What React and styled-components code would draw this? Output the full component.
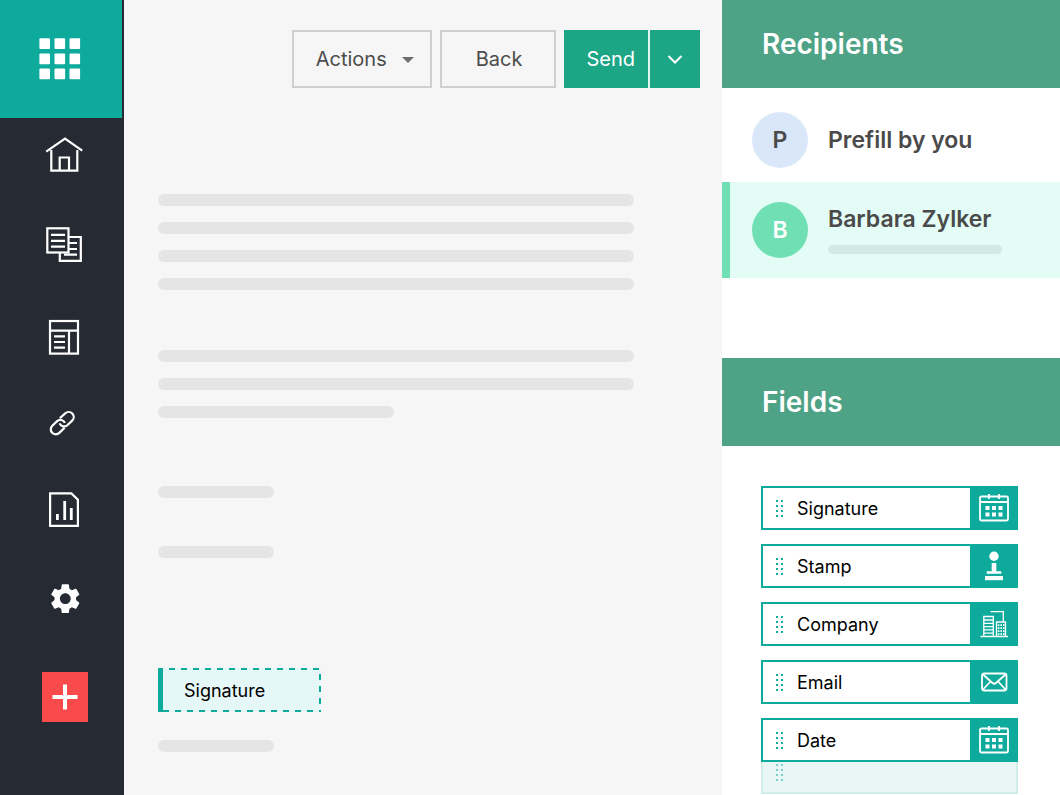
import React, { useState } from 'react'
import styled, { createGlobalStyle } from 'styled-components'
import { MdSettings } from 'react-icons/md'

const GlobalStyle = createGlobalStyle`
  * {
    box-sizing: border-box;
  }
  body {
    margin: 0;
    background-color: #fff;
    font-family: Inter, 'Liberation Sans', sans-serif;
  }
  button {
    font-family: inherit;
    cursor: pointer;
  }
  svg {
    display: block;
  }
`;

const Page = styled.div`
  display: flex;
  min-height: 100vh;
`;

//  Left navigation
//

const Sidebar = styled.aside`
  flex: 0 0 124px;
  background-color: #252a33;
`;

const Logo = styled.a`
  display: flex;
  align-items: center;
  margin-right: 2px;
  height: 118px;
  padding-left: 38px;
  background-color: #0eab9d;
`;

const Nav = styled.nav`
  display: flex;
  flex-direction: column;
  align-items: center;
  gap: 41px;
  padding: 13px 0 48px 4px;
  a {
    color: #fff;
  }
`;

const AddButton = styled.button`
  display: flex;
  align-items: center;
  justify-content: center;
  width: 46px;
  height: 50px;
  margin-left: 42px;
  padding: 0;
  border: none;
  background-color: #fb4a4c;
`;

//  Document
//

const Document = styled.main`
  flex: 1;
  min-width: 0;
  background-color: #f6f6f6;
`;

const Toolbar = styled.div`
  display: flex;
  justify-content: flex-end;
  gap: 8px;
  padding: 30px 22px 0;
`;

const ToolButton = styled.button`
  display: flex;
  align-items: center;
  justify-content: center;
  gap: 14px;
  height: 58px;
  padding: ${(props) => props.$padding};
  border: 2px solid #cfcfcf;
  background-color: transparent;
  color: #4c4c4c;
  font-size: 20px;
`;

const SendGroup = styled.div`
  display: flex;
  gap: 2px;
  background-color: #e4f5f0;
`;

const SendButton = styled.button`
  display: flex;
  align-items: center;
  justify-content: center;
  height: 58px;
  padding: ${(props) => props.$padding};
  border: none;
  background-color: #1ca686;
  color: #fff;
  font-size: 20px;
`;

const Paper = styled.div`
  padding: 106px 88px 40px 34px;
`;

const Paragraph = styled.div`
  display: flex;
  flex-direction: column;
  gap: 16px;
  margin-bottom: ${(props) => props.$after}px;
`;

const Line = styled.div`
  width: ${(props) => props.$width || '100%'};
  height: 12px;
  border-radius: 6px;
  background-color: #e5e5e5;
`;

const Dropped = styled.div`
  display: flex;
  width: 163px;
  height: 44px;
  margin-bottom: 28px;
  border-left: 5px solid #0eab9d;
`;

// dashes on three sides, the left side is solid
const DroppedLabel = styled.div`
  flex: 1;
  display: flex;
  align-items: center;
  padding-left: 21px;
  color: #000;
  font-size: 18px;
  background-color: #e5f7f6;
  background-image:
    repeating-linear-gradient(90deg, transparent 0 6px, #0eab9d 6px 12px),
    repeating-linear-gradient(90deg, #0eab9d 0 6px, transparent 6px 12px),
    repeating-linear-gradient(180deg, transparent 0 6px, #0eab9d 6px 12px);
  background-size: 100% 2px, 100% 2px, 2px 100%;
  background-position: top, bottom, right;
  background-repeat: no-repeat;
`;

//  Right panel
//

const Panel = styled.aside`
  flex: 0 0 338px;
  background-color: #fff;
`;

const PanelTitle = styled.h2`
  display: flex;
  align-items: center;
  height: 88px;
  margin: 0;
  padding-left: 40px;
  background-color: #4ea285;
  color: #fff;
  font-size: 28px;
  font-weight: 600;
`;

const Recipients = styled.ul`
  margin: 0 0 80px;
  padding: 10px 0 0;
  list-style: none;
`;

const Recipient = styled.li`
  display: flex;
  align-items: center;
  gap: 20px;
  height: ${(props) => (props.$active ? 96 : 84)}px;
  padding: 0 20px 0 22px;
  border-left: 8px solid ${(props) => (props.$active ? '#70dfb4' : 'transparent')};
  background-color: ${(props) => (props.$active ? '#e3fcf6' : '#fff')};
  color: #4a4a4a;
`;

const Avatar = styled.span`
  display: flex;
  align-items: center;
  justify-content: center;
  flex: 0 0 56px;
  height: 56px;
  border-radius: 50%;
  background-color: ${(props) => props.$background};
  color: ${(props) => props.$color};
  font-size: 23px;
  font-weight: 600;
`;

const Name = styled.div`
  font-size: 23px;
  line-height: 26px;
  font-weight: 600;
`;

const EmailLine = styled.div`
  width: 174px;
  height: 9px;
  margin-top: 13px;
  border-radius: 5px;
  background-color: #d3e9e3;
`;

const FieldList = styled.ul`
  display: flex;
  flex-direction: column;
  gap: 14px;
  margin: 0;
  padding: 40px 42px 0 39px;
  list-style: none;
`;

const Field = styled.button`
  display: flex;
  align-items: stretch;
  width: 100%;
  height: 44px;
  padding: 0;
  border: 2px solid #0eab9d;
  background-color: #fff;
  color: #000;
  font-size: 18px;
`;

const Grip = styled.span`
  display: grid;
  grid-template-columns: 2px 2px;
  gap: 3px;
  align-content: center;
  padding: 0 14px 0 13px;
  i {
    width: 2px;
    height: 2px;
    background-color: #0eab9d;
  }
`;

const FieldName = styled.span`
  display: flex;
  align-items: center;
  flex: 1;
`;

const FieldIcon = styled.span`
  display: flex;
  align-items: center;
  justify-content: center;
  width: 46px;
  padding-left: 2px;
  color: #fff;
  background-color: #0eab9d;
`;

const NextField = styled.div`
  display: flex;
  height: 32px;
  margin: 0 42px 0 39px;
  padding-bottom: 9px;
  border: 2px solid #cfeee9;
  border-top: none;
  background-color: #e8f6f5;
  ${Grip} {
    opacity: 0.5;
  }
`;

const LogoIcon = () => (
  <svg width="44" height="44" viewBox="0 0 44 44" fill="#fff">
    {[1.4, 16.5, 31.5].map((x) => [1.3, 16.6, 31.6].map((y) => (
      <rect key={`${x}-${y}`} x={x} y={y} width="10.6" height="10.6" rx="1" />
    )))}
  </svg>
)

const NavIcon = ({ children }) => (
  <svg width="48" height="48" viewBox="0 0 48 48" fill="none" stroke="currentColor" strokeWidth="2.2">
    {children}
  </svg>
)

const HomeIcon = () => (
  <NavIcon>
    <path d="M6.2 20.6 25 7.6 42.2 19.6" />
    <path d="M11.3 19V39.7H37.3V19" />
    <path d="M19.7 39.7V26.5H29V39.7" />
  </NavIcon>
)

const DocumentsIcon = () => (
  <NavIcon>
    <rect x="7.3" y="8.3" width="21.2" height="24.2" />
    <path d="M11 14.8h14M11 20.8h14M11 26.6h14" />
    <path d="M28.5 17H40.8V40.8H19.8V33" />
    <path d="M29 23h8M29 29h8M24 34.7h13" />
  </NavIcon>
)

const TemplatesIcon = () => (
  <NavIcon>
    <rect x="10" y="12" width="28" height="32.6" />
    <path d="M10 21.7h28M29 21.7v23" />
    <path d="M14 27.3h11M14 33h11M14 38.7h11" />
  </NavIcon>
)

// two interlocked capsules, each one open where the other passes over it
const LinkIcon = () => (
  <NavIcon>
    <path d="M19.8 20.3 25.2 15.4a5 5 0 0 1 7 7.2L27.3 27.2c-2.6 2.3-6.4 1.3-7.8-1.8" />
    <path d="M24.6 29.7 19.3 34.9a5 5 0 0 1-7-7.2L17.1 23.1c2.6-2.3 6.4-1.3 7.8 1.8" />
  </NavIcon>
)

const ReportsIcon = () => (
  <NavIcon>
    <path d="M10.1 6.4H31.4L37.9 12.7V38.8H10.1Z" />
    <path strokeWidth="2.8" d="M17.4 27v6M24.7 14v19M31.3 21v12" />
  </NavIcon>
)

const SettingsIcon = () => (
  <NavIcon>
    <MdSettings x="7.3" y="4.7" size={36} />
  </NavIcon>
)

const CalendarIcon = () => (
  <svg width="30" height="30" viewBox="0 0 30 30" fill="none" stroke="currentColor" strokeWidth="1.8">
    <rect x="1" y="3.5" width="28" height="24" rx="1.5" />
    <path d="M1 9h28M10 1v5M20 1v5" />
    <path strokeWidth="4" d="M6.5 15h4M13 15h4M19.5 15h4M6.5 21.5h4M13 21.5h4M19.5 21.5h4" />
  </svg>
)

const StampIcon = () => (
  <svg width="30" height="30" viewBox="0 0 30 30" fill="currentColor">
    <circle cx="15" cy="5.3" r="4.7" />
    <path d="M12.7 12h4.6v8.3h5v2.5H7.7v-2.5h5z" />
    <rect x="6" y="25" width="18" height="4.2" />
  </svg>
)

const CompanyIcon = () => (
  <svg width="30" height="30" viewBox="0 0 30 30" fill="none" stroke="currentColor" strokeWidth="1.3">
    <path d="M1.5 27.5H29M4.8 27.5v-20h9.5v20M17.5 27.5V13h9v14.5" />
    <path d="M4.8 11h9.5M4.8 14.3h9.5M4.8 17.6h9.5M4.8 20.9h9.5M4.8 24.2h9.5" />
    <path d="M11.5 2.7h12.8V13" />
    <path strokeDasharray="1.6 1" strokeWidth="1.8" d="M18.8 16.2h7M18.8 19.2h7M18.8 22.2h7M18.8 25.2h7" />
  </svg>
)

const EmailIcon = () => (
  <svg width="30" height="30" viewBox="0 0 30 30" fill="none" stroke="currentColor" strokeWidth="1.8">
    <rect x="3" y="6.5" width="24.5" height="17" rx="2.5" />
    <path d="M4 7.5 13.5 16q1.7 1.5 3.4 0L26.5 7.5M4 22.5l7.5-8M26.5 22.5l-7.5-8" />
  </svg>
)

const GripDots = () => (
  <Grip aria-hidden="true">
    {Array.from({ length: 8 }, (_, i) => <i key={i} />)}
  </Grip>
)

const navItems = [
  { label: 'Home', icon: <HomeIcon /> },
  { label: 'Documents', icon: <DocumentsIcon /> },
  { label: 'Templates', icon: <TemplatesIcon /> },
  { label: 'Links', icon: <LinkIcon /> },
  { label: 'Reports', icon: <ReportsIcon /> },
  { label: 'Settings', icon: <SettingsIcon /> },
]

const recipients = [
  { name: 'Prefill by you', initial: 'P', background: '#dae7f9', color: '#4a4a4a' },
  { name: 'Barbara Zylker', initial: 'B', background: '#70dfb4', color: '#fff', email: true },
]

const fields = [
  { name: 'Signature', icon: <CalendarIcon /> },
  { name: 'Stamp', icon: <StampIcon /> },
  { name: 'Company', icon: <CompanyIcon /> },
  { name: 'Email', icon: <EmailIcon /> },
  { name: 'Date', icon: <CalendarIcon /> },
]

const App = () => {
  // index of the recipient that gets the fields
  const [active, setActive] = useState(1);
  return (
    <>
      <GlobalStyle />
      <Page>
        <Sidebar>
          <Logo href="#" aria-label="Apps"><LogoIcon /></Logo>
          <Nav>
            {navItems.map((item) => (
              <a key={item.label} href="#" aria-label={item.label}>{item.icon}</a>
            ))}
          </Nav>
          <AddButton aria-label="Add">
            <svg width="26" height="26" viewBox="0 0 26 26" stroke="#fff" strokeWidth="4">
              <path d="M13 0.5v25M0.5 13h25" />
            </svg>
          </AddButton>
        </Sidebar>

        <Document>
          <Toolbar>
            <ToolButton $padding="0 15px 0 22px">
              Actions
              <svg width="14" height="8" viewBox="0 0 14 8" fill="#6c6f6e">
                <path d="M1 2h12L7 8z" />
              </svg>
            </ToolButton>
            <ToolButton $padding="0 32px 0 34px">Back</ToolButton>
            <SendGroup>
              <SendButton $padding="0 13px 0 22px">Send</SendButton>
              <SendButton $padding="0 17px" aria-label="More send options">
                <svg width="16" height="10" viewBox="0 0 16 10" fill="none" stroke="#fff" strokeWidth="2">
                  <path d="M1.5 2 8 8.5 14.5 2" />
                </svg>
              </SendButton>
            </SendGroup>
          </Toolbar>
          <Paper>
            <Paragraph $after={60}>
              <Line />
              <Line />
              <Line />
              <Line />
            </Paragraph>
            <Paragraph $after={68}>
              <Line />
              <Line />
              <Line $width="236px" />
            </Paragraph>
            <Paragraph $after={48}>
              <Line $width="116px" />
            </Paragraph>
            <Paragraph $after={110}>
              <Line $width="116px" />
            </Paragraph>
            <Dropped>
              <DroppedLabel>Signature</DroppedLabel>
            </Dropped>
            <Line $width="116px" />
          </Paper>
        </Document>

        <Panel>
          <PanelTitle>Recipients</PanelTitle>
          <Recipients>
            {recipients.map((person, i) => (
              <Recipient key={person.name} $active={i === active} onClick={() => setActive(i)}>
                <Avatar $background={person.background} $color={person.color}>{person.initial}</Avatar>
                <div>
                  <Name>{person.name}</Name>
                  {person.email && <EmailLine />}
                </div>
              </Recipient>
            ))}
          </Recipients>
          <PanelTitle>Fields</PanelTitle>
          <FieldList>
            {fields.map((field) => (
              <li key={field.name}>
                <Field>
                  <GripDots />
                  <FieldName>{field.name}</FieldName>
                  <FieldIcon>{field.icon}</FieldIcon>
                </Field>
              </li>
            ))}
          </FieldList>
          <NextField><GripDots /></NextField>
        </Panel>
      </Page>
    </>
  );
}

export default App
